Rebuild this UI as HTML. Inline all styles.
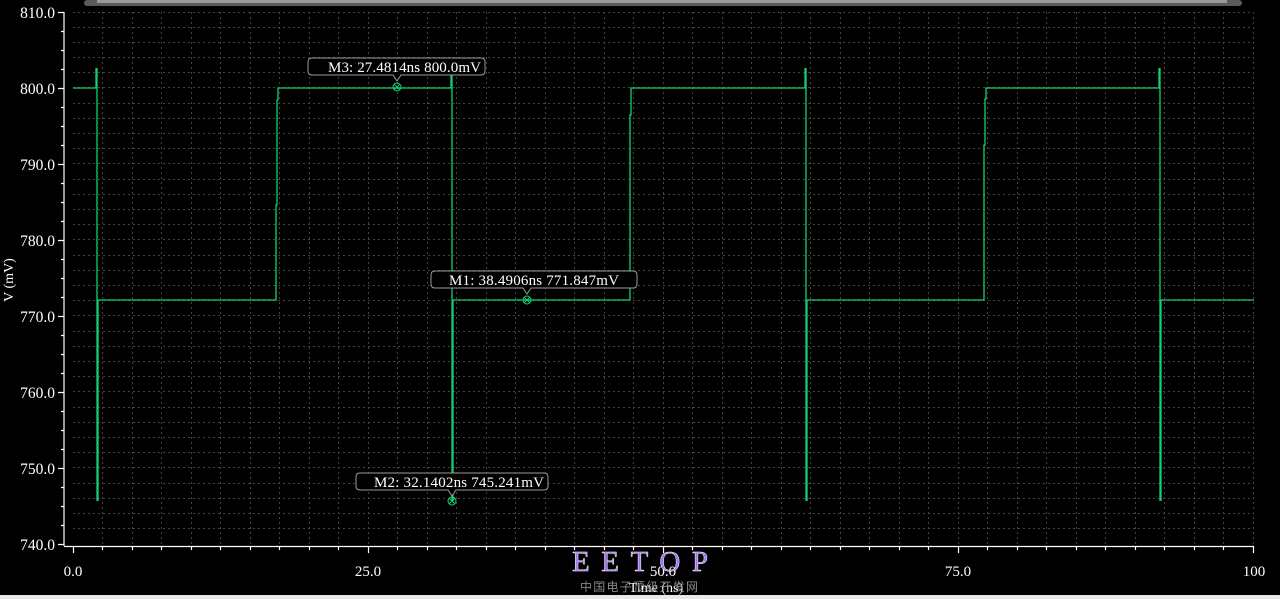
<!DOCTYPE html>
<html><head><meta charset="utf-8"><style>
html,body{margin:0;padding:0;background:#000;width:1280px;height:599px;overflow:hidden}
svg{display:block}
text{font-family:"Liberation Serif",serif}
</style></head><body>
<svg width="1280" height="599" viewBox="0 0 1280 599" xmlns="http://www.w3.org/2000/svg">
<rect width="1280" height="599" fill="#000"/>
<rect x="0" y="595" width="1280" height="4" fill="#e8e8e8"/>
<rect x="84" y="0" width="1158" height="6" rx="3" fill="#5a5a5a"/>
<rect x="97" y="0" width="1130" height="3" fill="#9a9a9a"/>
<g stroke="#444" stroke-width="1" stroke-dasharray="2,3">
<g>
<line x1="73" y1="12.5" x2="1254" y2="12.5"/><line x1="73" y1="27.5" x2="1254" y2="27.5"/><line x1="73" y1="42.5" x2="1254" y2="42.5"/><line x1="73" y1="57.5" x2="1254" y2="57.5"/><line x1="73" y1="72.5" x2="1254" y2="72.5"/><line x1="73" y1="87.5" x2="1254" y2="87.5"/><line x1="73" y1="103.5" x2="1254" y2="103.5"/><line x1="73" y1="118.5" x2="1254" y2="118.5"/><line x1="73" y1="133.5" x2="1254" y2="133.5"/><line x1="73" y1="148.5" x2="1254" y2="148.5"/><line x1="73" y1="163.5" x2="1254" y2="163.5"/><line x1="73" y1="179.5" x2="1254" y2="179.5"/><line x1="73" y1="194.5" x2="1254" y2="194.5"/><line x1="73" y1="209.5" x2="1254" y2="209.5"/><line x1="73" y1="224.5" x2="1254" y2="224.5"/><line x1="73" y1="239.5" x2="1254" y2="239.5"/><line x1="73" y1="255.5" x2="1254" y2="255.5"/><line x1="73" y1="270.5" x2="1254" y2="270.5"/><line x1="73" y1="285.5" x2="1254" y2="285.5"/><line x1="73" y1="300.5" x2="1254" y2="300.5"/><line x1="73" y1="315.5" x2="1254" y2="315.5"/><line x1="73" y1="331.5" x2="1254" y2="331.5"/><line x1="73" y1="346.5" x2="1254" y2="346.5"/><line x1="73" y1="361.5" x2="1254" y2="361.5"/><line x1="73" y1="376.5" x2="1254" y2="376.5"/><line x1="73" y1="391.5" x2="1254" y2="391.5"/><line x1="73" y1="407.5" x2="1254" y2="407.5"/><line x1="73" y1="422.5" x2="1254" y2="422.5"/><line x1="73" y1="437.5" x2="1254" y2="437.5"/><line x1="73" y1="452.5" x2="1254" y2="452.5"/><line x1="73" y1="467.5" x2="1254" y2="467.5"/><line x1="73" y1="483.5" x2="1254" y2="483.5"/><line x1="73" y1="498.5" x2="1254" y2="498.5"/><line x1="73" y1="513.5" x2="1254" y2="513.5"/><line x1="73" y1="528.5" x2="1254" y2="528.5"/>
</g>
<g>
<line x1="102.5" y1="12" x2="102.5" y2="546"/><line x1="132.5" y1="12" x2="132.5" y2="546"/><line x1="161.5" y1="12" x2="161.5" y2="546"/><line x1="191.5" y1="12" x2="191.5" y2="546"/><line x1="220.5" y1="12" x2="220.5" y2="546"/><line x1="250.5" y1="12" x2="250.5" y2="546"/><line x1="279.5" y1="12" x2="279.5" y2="546"/><line x1="309.5" y1="12" x2="309.5" y2="546"/><line x1="338.5" y1="12" x2="338.5" y2="546"/><line x1="368.5" y1="12" x2="368.5" y2="546"/><line x1="397.5" y1="12" x2="397.5" y2="546"/><line x1="427.5" y1="12" x2="427.5" y2="546"/><line x1="456.5" y1="12" x2="456.5" y2="546"/><line x1="486.5" y1="12" x2="486.5" y2="546"/><line x1="515.5" y1="12" x2="515.5" y2="546"/><line x1="545.5" y1="12" x2="545.5" y2="546"/><line x1="574.5" y1="12" x2="574.5" y2="546"/><line x1="604.5" y1="12" x2="604.5" y2="546"/><line x1="633.5" y1="12" x2="633.5" y2="546"/><line x1="663.5" y1="12" x2="663.5" y2="546"/><line x1="692.5" y1="12" x2="692.5" y2="546"/><line x1="722.5" y1="12" x2="722.5" y2="546"/><line x1="751.5" y1="12" x2="751.5" y2="546"/><line x1="781.5" y1="12" x2="781.5" y2="546"/><line x1="810.5" y1="12" x2="810.5" y2="546"/><line x1="840.5" y1="12" x2="840.5" y2="546"/><line x1="869.5" y1="12" x2="869.5" y2="546"/><line x1="899.5" y1="12" x2="899.5" y2="546"/><line x1="928.5" y1="12" x2="928.5" y2="546"/><line x1="958.5" y1="12" x2="958.5" y2="546"/><line x1="987.5" y1="12" x2="987.5" y2="546"/><line x1="1017.5" y1="12" x2="1017.5" y2="546"/><line x1="1046.5" y1="12" x2="1046.5" y2="546"/><line x1="1076.5" y1="12" x2="1076.5" y2="546"/><line x1="1105.5" y1="12" x2="1105.5" y2="546"/><line x1="1135.5" y1="12" x2="1135.5" y2="546"/><line x1="1164.5" y1="12" x2="1164.5" y2="546"/><line x1="1194.5" y1="12" x2="1194.5" y2="546"/><line x1="1223.5" y1="12" x2="1223.5" y2="546"/><line x1="1253.5" y1="12" x2="1253.5" y2="546"/>
</g>
</g>
<g stroke="#fff" stroke-width="1.2" fill="none">
<line x1="64" y1="12" x2="64" y2="546"/>
<line x1="64" y1="546.5" x2="1254" y2="546.5"/>
<path d="M58 12.5H64M58 88.5H64M58 164.5H64M58 240.5H64M58 316.5H64M58 392.5H64M58 468.5H64M58 544.5H64"/>
<path d="M61 31.5H64M61 50.5H64M61 69.5H64M61 107.5H64M61 126.5H64M61 145.5H64M61 183.5H64M61 202.5H64M61 221.5H64M61 259.5H64M61 278.5H64M61 297.5H64M61 335.5H64M61 354.5H64M61 373.5H64M61 411.5H64M61 430.5H64M61 449.5H64M61 487.5H64M61 506.5H64M61 525.5H64"/>
<path d="M73.5 546V553M368.5 546V553M663.5 546V553M958.5 546V553M1253.5 546V553"/>
<path d="M102.5 546V550M132.5 546V550M161.5 546V550M191.5 546V550M220.5 546V550M250.5 546V550M279.5 546V550M309.5 546V550M338.5 546V550M397.5 546V550M427.5 546V550M456.5 546V550M486.5 546V550M515.5 546V550M545.5 546V550M574.5 546V550M604.5 546V550M633.5 546V550M692.5 546V550M722.5 546V550M751.5 546V550M781.5 546V550M810.5 546V550M840.5 546V550M869.5 546V550M899.5 546V550M928.5 546V550M987.5 546V550M1017.5 546V550M1046.5 546V550M1076.5 546V550M1105.5 546V550M1135.5 546V550M1164.5 546V550M1194.5 546V550M1223.5 546V550"/>
</g>
<g fill="#fff" font-size="15.5" text-anchor="end">
<text x="55" y="18">810.0</text><text x="55" y="94">800.0</text><text x="55" y="170">790.0</text><text x="55" y="246">780.0</text><text x="55" y="322">770.0</text><text x="55" y="398">760.0</text><text x="55" y="474">750.0</text><text x="55" y="550">740.0</text>
</g>
<g fill="#fff" font-size="15" text-anchor="middle">
<text x="73" y="576">0.0</text><text x="368" y="576">25.0</text><text x="663" y="576">50.0</text><text x="958" y="576">75.0</text><text x="1254" y="576">100</text>
<text x="656" y="592" font-size="14">Time (ns)</text>
<text transform="translate(13 280) rotate(-90)" font-size="14">V (mV)</text>
</g>
<g stroke="#12d070" stroke-width="1.3" fill="none">
<path d="M73 88H96V68M97 68V501M98 501V300H276V205H277V100H278V88H451V68M452 68V501M453 501V300H630V115H631V88H805V68M806 68V501M807 501V300H984V145H985V99H986V88H1159V68M1160 68V501M1161 501V300H1254"/>
</g>
<g stroke="#12d070" stroke-width="1" fill="none">
<circle cx="397" cy="87" r="4"/><path d="M394 84L400 90M400 84L394 90"/>
<circle cx="527" cy="300" r="4"/><path d="M524 297L530 303M530 297L524 303"/>
<circle cx="452" cy="501" r="4"/><path d="M449 498L455 504M455 498L449 504"/>
</g>
<g stroke="#9a9a9a" stroke-width="1" fill="#000">
<path d="M312 58H481Q485 58 485 62V71Q485 75 481 75H401L397 81L393 75H312Q308 75 308 71V62Q308 58 312 58Z"/>
<path d="M435 271H633Q637 271 637 275V284Q637 288 633 288H531L527 294L523 288H435Q431 288 431 284V275Q431 271 435 271Z"/>
<path d="M360 473H544Q548 473 548 477V486Q548 490 544 490H456L452 496L448 490H360Q356 490 356 486V477Q356 473 360 473Z"/>
</g>
<g fill="#fff" font-size="15">
<text x="328" y="72" textLength="153">M3: 27.4814ns 800.0mV</text>
<text x="449" y="285" textLength="170">M1: 38.4906ns 771.847mV</text>
<text x="374" y="487" textLength="170">M2: 32.1402ns 745.241mV</text>
</g>
<g font-size="29" fill="#a070f0" stroke="#fff" stroke-width="0.5">
<text x="572" y="571" textLength="136">EETOP</text>
</g>
<text x="580" y="591" font-size="12" fill="#888" font-family="'Noto Sans CJK SC',sans-serif" textLength="118">中国电子顶级开发网</text>
</svg>
</body></html>
